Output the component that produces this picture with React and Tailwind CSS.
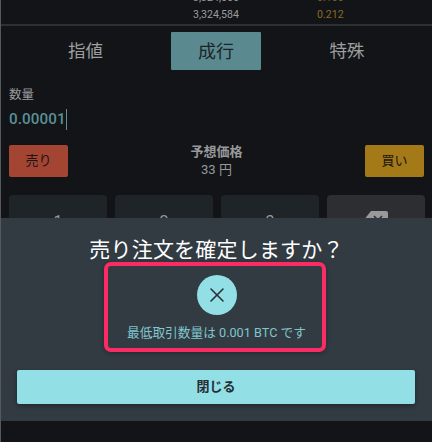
import React from 'react';
import { X } from 'lucide-react';

const Modal = () => (
  <div className="absolute left-0 right-0 top-[218px] h-[203px] bg-[#323a42] flex flex-col items-center">
    <h2 className="mt-[18px] h-[28px] text-[21px] leading-[28px] text-white tracking-[0.2px]">売り注文を確定しますか？</h2>
    <div className="-mt-[2px] mr-[3px] w-[222px] h-[90px] pl-[3px] border-4 border-[#fb2c63] rounded-[7px] shadow-[0_1px_4px_rgba(0,0,0,0.3)] flex flex-col items-center">
      <div className="mt-[9px] h-10 w-10 rounded-full bg-[#92dfe5] flex items-center justify-center">
        <X className="h-6 w-6 text-[#2a323a]" strokeWidth={1.6} />
      </div>
      <p className="mt-[10px] text-[12.7px] leading-[16px] text-[#7fc7cd] whitespace-nowrap">最低取引数量は 0.001 BTC です</p>
    </div>
    <div className="mt-[18px] w-full px-4">
      <button className="h-[34px] w-[398px] rounded-[2px] bg-[#92dfe5] text-[13px] font-bold text-[#262d34] shadow-[0_2px_4px_rgba(0,0,0,0.35)]">閉じる</button>
    </div>
  </div>
);

export default function App() {
  return (
    <div className="relative h-[442px] w-[432px] overflow-hidden bg-[#121418] border-l border-[#55585c] font-['Roboto','Noto_Sans_CJK_JP',sans-serif]">
      <div className="h-[24px] overflow-hidden border-b-2 border-[#2e3034] box-content">
        <div className="flex h-[14px] -mt-[9px] text-[10.6px] leading-[14px]">
          <span className="ml-[192px] w-[124px] text-[#9a9c9e]">3,324,666</span>
          <span className="text-[#7a5f20]">0.100</span>
        </div>
        <div className="flex h-[14px] mt-[3px] text-[10.6px] leading-[14px]">
          <span className="ml-[192px] w-[124px] text-[#9a9c9e]">3,324,584</span>
          <span className="text-[#8a6c1e]">0.212</span>
        </div>
      </div>

      <div className="mt-[6px] flex h-[38px] items-center text-[17.5px]">
        <div className="w-[170px] pr-[1px] text-center text-[#9c9e9f]">指値</div>
        <div className="flex h-[38px] w-[90px] items-center justify-center rounded-[1px] bg-[#5a8a8f] text-[18px] text-[#1d2327]">成行</div>
        <div className="w-[171px] pl-[1px] text-center text-[#9c9e9f]">特殊</div>
      </div>

      <div className="mt-[17px] pl-2">
        <div className="text-[12.5px] leading-[16px] text-[#97999b]">数量</div>
        <div className="mt-[6px] flex h-[20px] items-center">
          <span className="text-[15.2px] font-medium leading-[20px] tracking-[0.1px] text-[#5a9096]">0.00001</span>
          <span className="h-[21px] w-[1px] bg-[#5a9096]" />
        </div>
      </div>

      <div className="mt-[16px] flex items-start justify-between px-2">
        <button className="h-[32px] w-[59px] rounded-[2px] bg-[#a44432] text-[13px] text-[#1a1614]">売り</button>
        <div className="-mt-[2px] text-center text-[#97999b]">
          <div className="text-[13px] font-bold leading-[18px]">予想価格</div>
          <div className="text-[13px] leading-[18px]">33 円</div>
        </div>
        <button className="h-[32px] w-[59px] rounded-[2px] bg-[#a47a18] text-[13px] text-[#1a1614]">買い</button>
      </div>

      <div className="mt-[16px] grid grid-cols-[98px_98px_98px_98px] gap-x-[8px] px-2 text-[16px] text-[#97999b]">
        <div className="h-[70px] rounded-[4px] bg-[#1e2428] pt-[15px] text-center">1</div>
        <div className="h-[70px] rounded-[4px] bg-[#1e2428] pt-[15px] text-center">2</div>
        <div className="h-[70px] rounded-[4px] bg-[#1e2428] pt-[15px] text-center">3</div>
        <div className="flex h-[70px] justify-center rounded-[4px] bg-[#2c2e32] pt-[16px]">
          <svg width="26" height="20" viewBox="0 0 26 20">
            <path d="M8 0H23a2 2 0 0 1 2 2V18a2 2 0 0 1-2 2H8L0 10Z" fill="#97999b" />
            <path d="M11 5l8 8M19 5l-8 8" stroke="#2c2e32" strokeWidth="1.6" fill="none" />
          </svg>
        </div>
      </div>

      <Modal />
    </div>
  );
}
